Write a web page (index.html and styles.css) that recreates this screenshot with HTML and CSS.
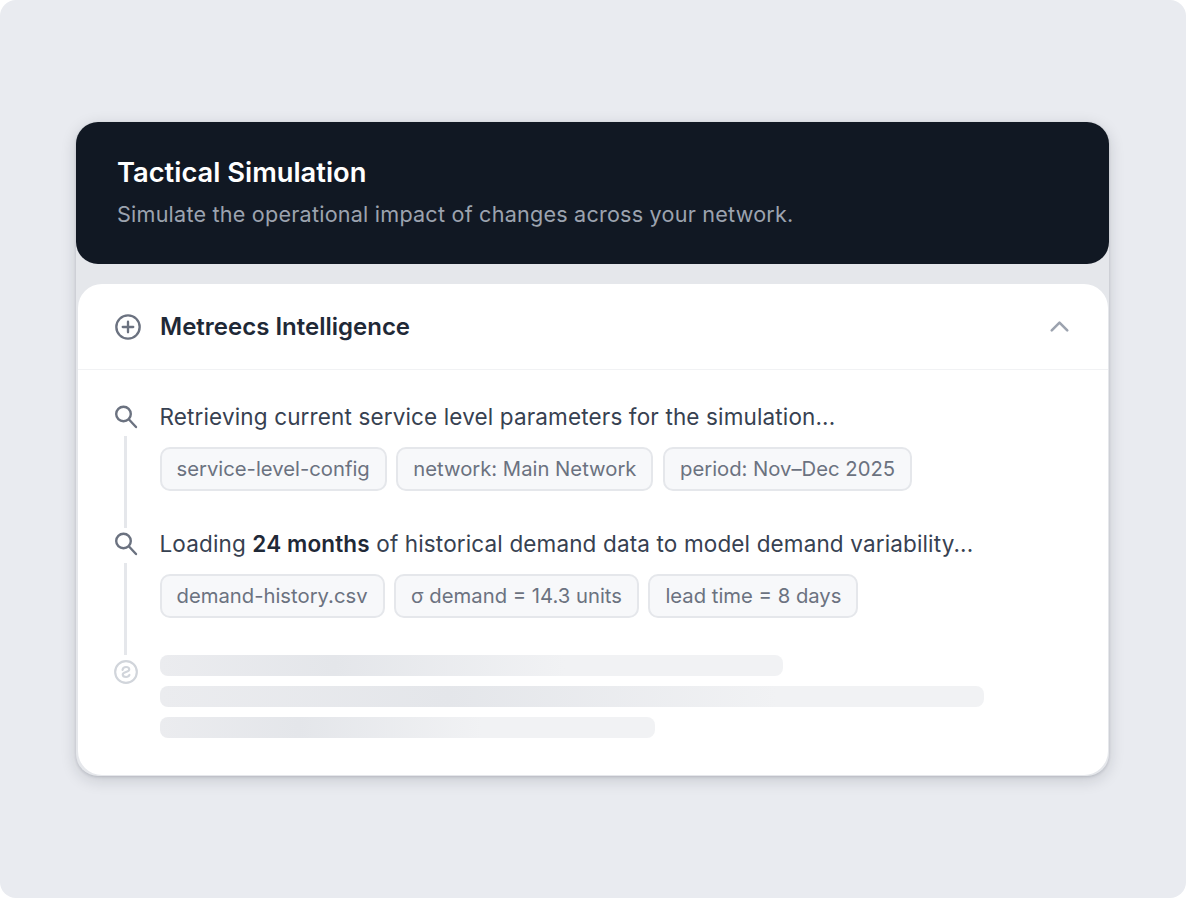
FILE: index.html
```html
<!DOCTYPE html>
<html lang="en">
<head>
<meta charset="utf-8">
<title>Tactical Simulation</title>
<link rel="stylesheet" href="styles.css">
</head>
<body>
<main class="frame">
  <section class="card">
    <header class="hero">
      <h1 class="hero-title">Tactical Simulation</h1>
      <p class="hero-sub">Simulate the operational impact of changes across your network.</p>
    </header>
    <div class="panel">
      <div class="panel-head">
        <svg class="icon-plus" viewBox="0 0 24 24" fill="none" stroke="currentColor" stroke-width="2" stroke-linecap="round"><circle cx="12" cy="12" r="10"/><path d="M12 7.5v9M7.5 12h9"/></svg>
        <h2 class="panel-title">Metreecs Intelligence</h2>
        <svg class="icon-chevron" viewBox="0 0 24 24" fill="none" stroke="currentColor" stroke-width="2" stroke-linecap="round" stroke-linejoin="round"><path d="M18 15l-6-6-6 6"/></svg>
      </div>
      <div class="panel-body">
        <div class="step">
          <div class="rail">
            <svg class="icon-search" viewBox="0 0 26 26" fill="none" stroke="currentColor" stroke-width="2.400" stroke-linecap="round"><circle cx="10.500" cy="10" r="7.300"/><path d="M23 23l-7-7.500"/></svg>
            <span class="rail-line"></span>
          </div>
          <div class="step-main">
            <p class="step-text">Retrieving current service level parameters for the simulation...</p>
            <div class="chips">
              <span class="chip">service-level-config</span>
              <span class="chip">network: Main Network</span>
              <span class="chip">period: Nov–Dec 2025</span>
            </div>
          </div>
        </div>
        <div class="step">
          <div class="rail">
            <svg class="icon-search" viewBox="0 0 26 26" fill="none" stroke="currentColor" stroke-width="2.400" stroke-linecap="round"><circle cx="10.500" cy="10" r="7.300"/><path d="M23 23l-7-7.500"/></svg>
            <span class="rail-line"></span>
          </div>
          <div class="step-main">
            <p class="step-text">Loading <strong>24 months</strong> of historical demand data to model demand variability...</p>
            <div class="chips">
              <span class="chip">demand-history.csv</span>
              <span class="chip">σ demand = 14.3 units</span>
              <span class="chip">lead time = 8 days</span>
            </div>
          </div>
        </div>
        <div class="step step-last">
          <div class="rail rail-last">
            <svg class="icon-coin" viewBox="0 0 24 24" fill="none" stroke="currentColor" stroke-width="2" stroke-linecap="round" stroke-linejoin="round"><circle cx="12" cy="12" r="10"/><path d="M8.800 10c.3-1.600 1.600-2.600 3.200-2.600 1.800 0 3 1 3 2.300 0 2.700-6 1.900-6 4.600 0 1.300 1.300 2.300 3.100 2.300 1.400 0 2.600-.7 3.100-1.900"/></svg>
          </div>
          <div class="skeletons">
            <div class="skeleton skeleton-a"></div>
            <div class="skeleton skeleton-b"></div>
            <div class="skeleton skeleton-c"></div>
          </div>
        </div>
      </div>
    </div>
  </section>
</main>
</body>
</html>
```
FILE: styles.css
```css
* { box-sizing: border-box; }
html, body { margin: 0; padding: 0; background: #fff; }
body { font-family: Inter, "Liberation Sans", sans-serif; }

.frame {
  width: 1186px;
  height: 898px;
  background: #e9ebf0;
  border-radius: 16px;
  display: flex;
  align-items: center;
  justify-content: center;
  padding-right: 1px;
}
.card {
  width: 1033px;
  height: 654px;
  background: #e5e7eb;
  border-radius: 22px;
  box-shadow: 0 4px 16px rgba(17, 24, 39, .16), 0 1px 3px rgba(17, 24, 39, .14);
  display: flex;
  flex-direction: column;
}
.hero {
  height: 142px;
  background: #111823;
  border-radius: 22px;
  padding: 33px 41px 0;
}
.hero-title {
  margin: 0;
  font-size: 27.300px;
  line-height: 36px;
  font-weight: 600;
  color: #fff;
}
.hero-sub {
  margin: 9px 0 0;
  font-size: 21.600px;
  line-height: 28px;
  letter-spacing: .21px;
  color: #9ca3af;
}
.panel {
  margin: 20px 1px 1px 2px;
  flex: 1;
  background: #fff;
  border-radius: 24px;
  display: flex;
  flex-direction: column;
}
.panel-head {
  height: 86px;
  flex: none;
  display: flex;
  align-items: center;
  padding: 0 33px 0 36px;
  border-bottom: 1px solid #f1f2f4;
}
.icon-plus { width: 28px; height: 28px; color: #6b7280; flex: none; }
.panel-title {
  margin: 0 0 0 18px;
  flex: 1;
  font-size: 24px;
  line-height: 33px;
  font-weight: 600;
  color: #1f2937;
}
.icon-chevron { width: 31px; height: 31px; color: #9ca3af; flex: none; }
.panel-body { padding: 31px 34px 0; }
.step { display: flex; gap: 19.500px; }
.rail {
  width: 28px;
  flex: none;
  display: flex;
  flex-direction: column;
  align-items: center;
}
.icon-search { width: 26px; height: 26px; color: #6b7280; flex: none; margin-top: 3px; }
.rail-line {
  width: 3px;
  flex: 1;
  background: #e5e7eb;
  margin: 6px 2px 0 0;
}
.step-main { flex: 1; padding-bottom: 37px; }
.step-text {
  margin: 0;
  font-size: 22.500px;
  line-height: 32px;
  letter-spacing: .14px;
  color: #374151;
}
.step-text strong { font-weight: 600; color: #1f2937; }
.chips { display: flex; gap: 9.500px; margin-top: 14px; }
.chip {
  height: 44px;
  display: flex;
  align-items: center;
  padding: 0 15px 2px;
  background: #f7f8fa;
  border: 2px solid #e5e7eb;
  border-radius: 10px;
  font-size: 20.250px;
  color: #6b7280;
}
.step-last { align-items: flex-start; }
.rail-last { padding-top: 4px; }
.icon-coin { width: 26px; height: 26px; color: #d1d5db; }
.skeletons { flex: 1; display: flex; flex-direction: column; gap: 10.500px; }
.skeleton {
  height: 20.500px;
  border-radius: 8px;
  background: linear-gradient(90deg, #ebecef 0%, #e4e6ea 28%, #f1f2f4 65%, #f1f2f4 100%);
}
.skeleton-a { width: 623px; }
.skeleton-b { width: 824px; background: linear-gradient(90deg, #ebecef 0%, #e4e6ea 35%, #f1f2f4 75%, #f1f2f4 100%); }
.skeleton-c { width: 495px; }
```
